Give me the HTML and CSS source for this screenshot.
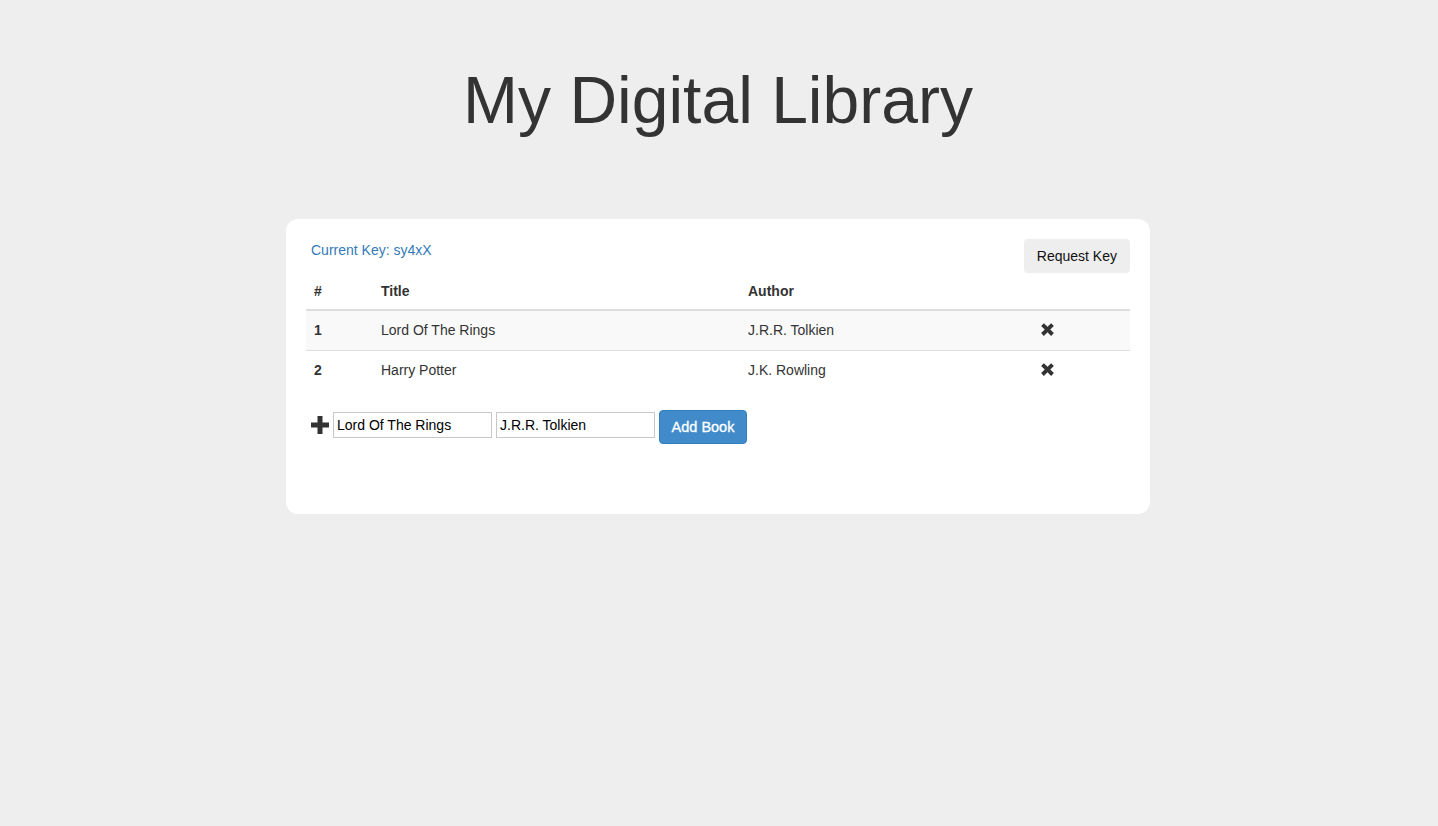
FILE: index.html
```html
<!DOCTYPE html>
<html>
<head>
<meta charset="utf-8">
<title>My Digital Library</title>
<link rel="stylesheet" href="styles.css">
</head>
<body>
<h1 class="page-title">My Digital Library</h1>
<div class="card">
  <div class="card-top">
    <div class="current-key">Current Key: sy4xX</div>
    <button class="btn btn-default">Request Key</button>
  </div>
  <table class="books">
    <thead>
      <tr><th class="c-num">#</th><th class="c-title">Title</th><th class="c-author">Author</th><th class="c-act"></th></tr>
    </thead>
    <tbody>
      <tr class="odd"><td class="num">1</td><td>Lord Of The Rings</td><td>J.R.R. Tolkien</td><td class="act"><svg class="icon-x" viewBox="0 0 16 16" width="17" height="17"><path d="M2 4.6 4.6 2 8 5.4 11.4 2 14 4.6 10.6 8 14 11.4 11.4 14 8 10.6 4.6 14 2 11.4 5.4 8Z" fill="#333"/></svg></td></tr>
      <tr><td class="num">2</td><td>Harry Potter</td><td>J.K. Rowling</td><td class="act"><svg class="icon-x" viewBox="0 0 16 16" width="17" height="17"><path d="M2 4.6 4.6 2 8 5.4 11.4 2 14 4.6 10.6 8 14 11.4 11.4 14 8 10.6 4.6 14 2 11.4 5.4 8Z" fill="#333"/></svg></td></tr>
    </tbody>
  </table>
  <form class="add-form">
    <svg class="icon-plus" viewBox="0 0 18 18" width="18" height="18"><path d="M6.5 0h5v6.5H18v5h-6.5V18h-5v-6.5H0v-5h6.5Z" fill="#333"/></svg>
    <input class="field" type="text" value="Lord Of The Rings">
    <input class="field" type="text" value="J.R.R. Tolkien">
    <button type="button" class="btn btn-primary">Add Book</button>
  </form>
</div>
</body>
</html>
```
FILE: styles.css
```css
html, body {
  margin: 0;
  padding: 0;
}
body {
  background: #eeeeee;
  font-family: "Liberation Sans", Arial, Helvetica, sans-serif;
  font-size: 14px;
  line-height: 20px;
  color: #333333;
}
.page-title {
  margin: 0;
  padding-top: 62px;
  height: 157px;
  box-sizing: border-box;
  text-align: center;
  font-size: 66px;
  line-height: 76px;
  font-weight: normal;
  color: #333333;
  padding-right: 2px;
}
.card {
  width: 864px;
  box-sizing: border-box;
  margin: 62px 0 0 calc(50% - 433px);
  background: #ffffff;
  border-radius: 12px;
  padding: 20px 20px 70px;
}
.card-top {
  display: flex;
  justify-content: space-between;
  align-items: flex-start;
}
.current-key {
  color: #337ab7;
  padding-left: 5px;
  margin-top: 1px;
}
.btn {
  font-family: inherit;
  font-size: 14px;
  line-height: 20px;
  border-radius: 4px;
  cursor: pointer;
}
.btn-default {
  background: #eeeeee;
  border: 0;
  color: #111;
  padding: 7px 13px;
  height: 34px;
}
.books {
  width: 100%;
  border-collapse: collapse;
  border-spacing: 0;
}
.books th, .books td {
  padding: 8px;
  text-align: left;
  vertical-align: top;
  line-height: 20px;
  height: 20px;
}
.books th {
  font-weight: bold;
  border-bottom: 2px solid #dddddd;
}
.books td {
  border-top: 1px solid #dddddd;
  padding-top: 9px;
  padding-bottom: 9px;
}
.books tbody tr:first-child td {
  border-top: 0;
}
.books tr.odd td {
  background: #f9f9f9;
}
.c-num { width: 51px; }
.c-title { width: 351px; }
.c-author { width: 275px; }
.num { font-weight: bold; }
.act { padding-top: 10px !important; }
.icon-x { display: block; margin-top: 0; }
.add-form {
  display: flex;
  align-items: center;
  margin-top: 20px;
  padding-left: 5px;
}
.icon-plus {
  display: block;
  margin-right: 4px;
  margin-top: -5px;
}
.field {
  width: 159px;
  height: 26px;
  box-sizing: border-box;
  border: 1px solid #c8c8c8;
  border-radius: 0;
  padding: 1px 3px;
  margin: -4px 4px 0 0;
  font-family: inherit;
  font-size: 14px;
  color: #000;
}
.btn-primary {
  background: #428bca;
  border: 1px solid #357ebd;
  color: #ffffff;
  padding: 6px 10px;
  height: 34px;
  width: 88px;
  font-size: 14.5px;
  -webkit-text-stroke: 0.3px #ffffff;
}
```
